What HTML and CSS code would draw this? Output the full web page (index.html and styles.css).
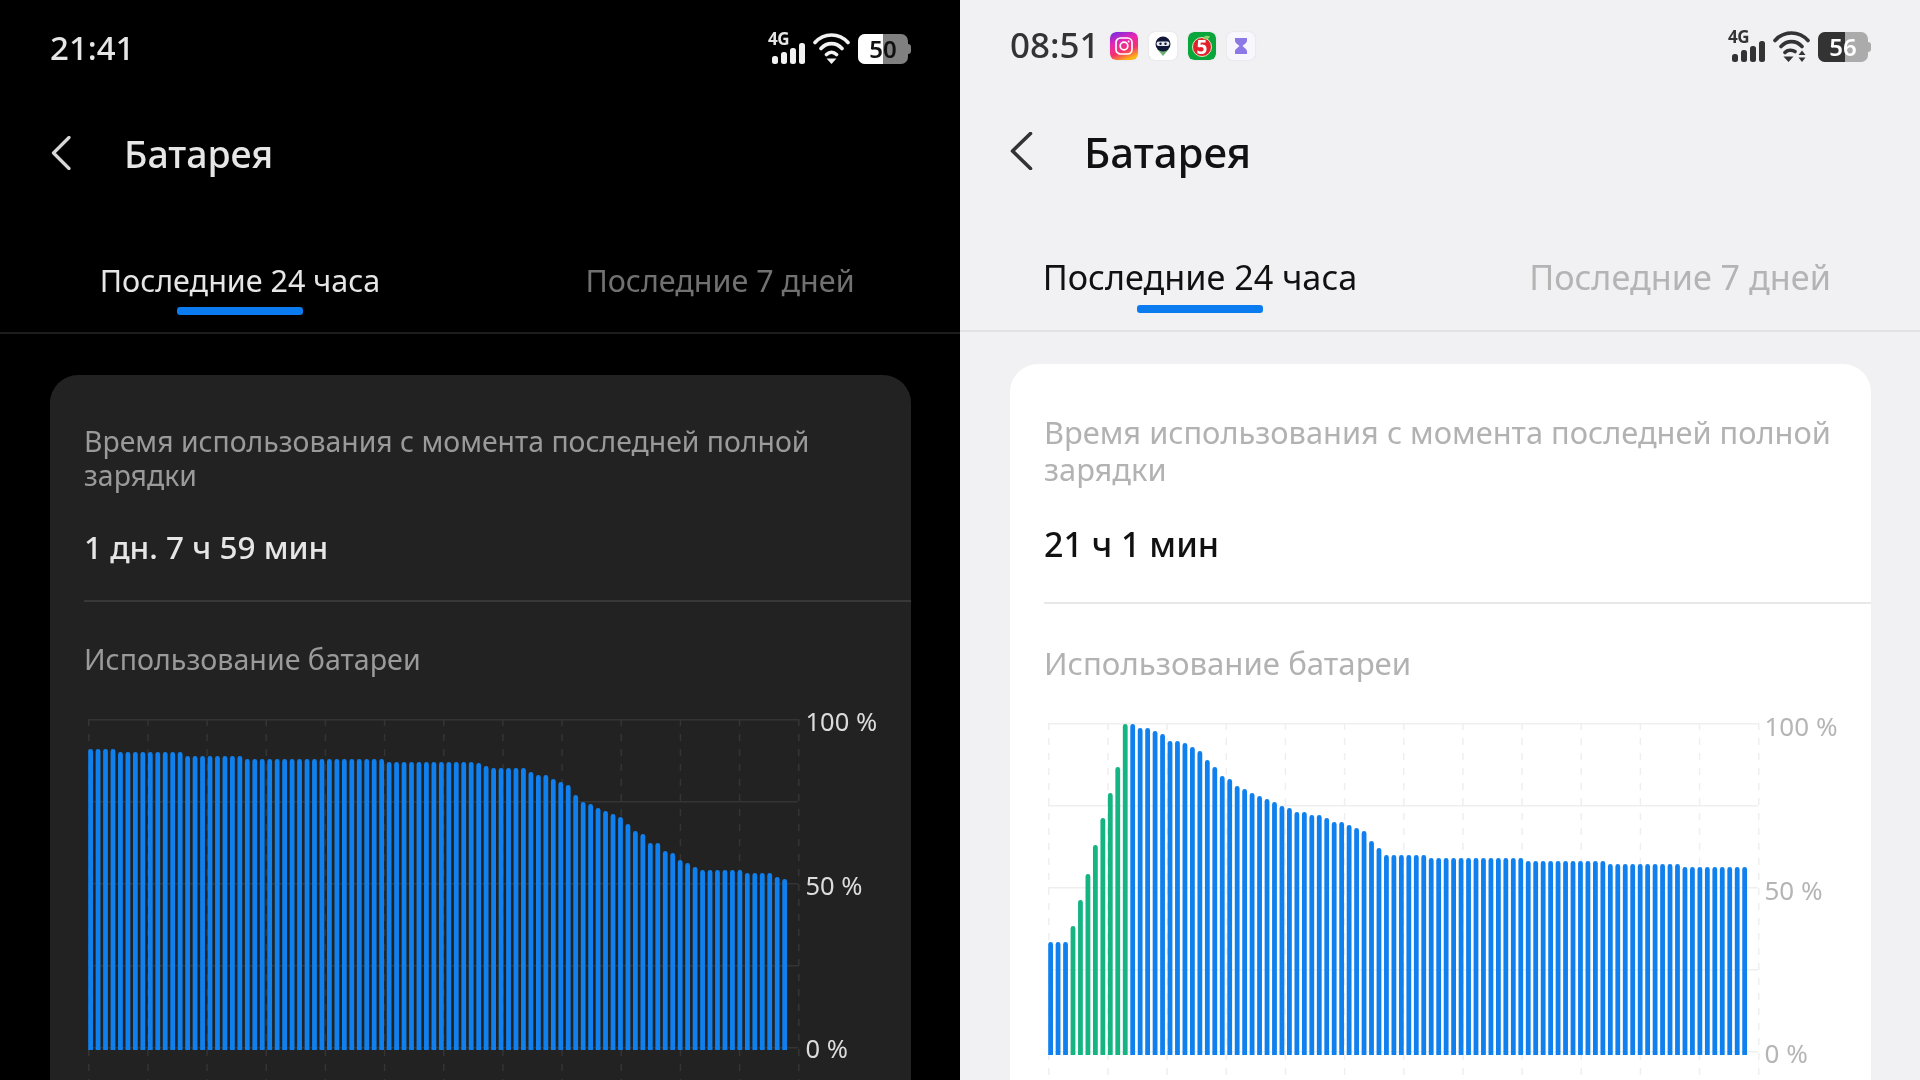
FILE: index.html
```html
<!DOCTYPE html>
<html lang="ru">
<head>
    <meta charset="UTF-8">
    <meta name="viewport" content="width=device-width, initial-scale=1.0">
    <title>Батарея</title>
    <link rel="stylesheet" href="styles.css">
</head>
<body>

<div class="screens">

    <!-- Dark phone -->
    <section class="screen dark">
        <div class="statusbar">
            <span class="time">21:41</span>
            <div class="status-icons">
                <div class="signal">
                    <span class="net">4G</span>
                    <svg width="34" height="21" viewBox="0 0 34 21"><rect x="1" y="13" width="6" height="8" rx="2.5"/><rect x="10" y="9" width="6" height="12" rx="2.5"/><rect x="19" y="5" width="6" height="16" rx="2.5"/><rect x="28" y="0" width="6" height="21" rx="2.5"/></svg>
                </div>
                <svg class="wifi" width="37" height="31" viewBox="0 0 37 31"><path d="M2 9.500C11 -0.500 26 -0.500 35 9.500M8 15.500C14 9 23 9 29 15.500M13.500 21.500C16.500 18.600 20.500 18.600 23.500 21.500" fill="none" stroke-width="3.600" stroke-linecap="round"/><path d="M13.500 25.500h10l-5 5.500z" class="wifi-dot"/></svg>
                <div class="battery"><span class="battery-fill"></span><span class="battery-text">50</span></div>
            </div>
        </div>

        <div class="titlebar">
            <svg class="back" width="20" height="34" viewBox="0 0 20 34"><path d="M18 1.500L2.500 17L18 32.500" fill="none" stroke-width="3.200" stroke-linecap="round" stroke-linejoin="round"/></svg>
            <h1 class="title">Батарея</h1>
        </div>

        <div class="tabs">
            <div class="tab active">Последние 24 часа<span class="tab-line"></span></div>
            <div class="tab">Последние 7 дней</div>
        </div>

        <div class="card">
            <p class="desc">Время использования с момента последней полной зарядки</p>
            <p class="value">1 дн. 7 ч 59 мин</p>
            <div class="divider"></div>
            <p class="chart-title">Использование батареи</p>
            <div class="chart">
                <svg class="plot" id="plotDark" width="712" height="361"></svg>
                <div class="axis"><span>100 %</span><span>50 %</span><span>0 %</span></div>
            </div>
        </div>
    </section>

    <!-- Light phone -->
    <section class="screen light">
        <div class="statusbar">
            <div class="status-left">
                <span class="time">08:51</span>
                <div class="app-icons">
                    <svg class="app" width="28" height="28" viewBox="0 0 28 28">
                        <defs><linearGradient id="insta" x1="0.2" y1="0" x2="0.6" y2="1"><stop offset="0" stop-color="#7a2be0"/><stop offset="0.35" stop-color="#e627b4"/><stop offset="0.7" stop-color="#f5336a"/><stop offset="1" stop-color="#fdb515"/></linearGradient></defs>
                        <rect width="28" height="28" rx="6" fill="url(#insta)"/>
                        <rect x="6" y="6" width="16" height="16" rx="4.500" fill="none" stroke="#fff" stroke-width="1.700"/>
                        <circle cx="14" cy="14" r="3.800" fill="none" stroke="#fff" stroke-width="1.700"/>
                        <circle cx="18.600" cy="9.400" r="1" fill="#fff"/>
                    </svg>
                    <svg class="app" width="28" height="28" viewBox="0 0 28 28">
                        <rect width="28" height="28" rx="6" fill="#fff"/>
                        <path d="M8 17h12l-6 7z" fill="#6fae73"/>
                        <circle cx="14" cy="12" r="7.500" fill="#101638"/>
                        <rect x="7.500" y="9.500" width="13" height="4.500" rx="2.200" fill="#e8e8ee"/>
                        <circle cx="11.500" cy="11.700" r="1.200" fill="#101638"/>
                        <circle cx="16.500" cy="11.700" r="1.200" fill="#101638"/>
                    </svg>
                    <svg class="app" width="28" height="28" viewBox="0 0 28 28">
                        <rect width="28" height="28" rx="6" fill="#0aa63c"/>
                        <circle cx="14" cy="15" r="9.500" fill="#e3202b" stroke="#d8efc4" stroke-width="1"/>
                        <path d="M15 5.500C17 3.500 20 3.500 22 4.500C21 7 18 8 15 7z" fill="#8ed36b"/>
                        <text x="14" y="21.500" text-anchor="middle" class="app-five">5</text>
                    </svg>
                    <svg class="app" width="28" height="28" viewBox="0 0 28 28">
                        <rect width="28" height="28" rx="6" fill="#f8f7fd"/>
                        <path d="M8 6h12v2.500c0 2.500-3 4-4.500 5.500c1.500 1.500 4.500 3 4.500 5.500V22H8v-2.500c0-2.500 3-4 4.500-5.500C11 12.500 8 11 8 8.500z" fill="#8c79e6"/>
                    </svg>
                </div>
            </div>
            <div class="status-icons">
                <div class="signal">
                    <span class="net">4G</span>
                    <svg width="34" height="21" viewBox="0 0 34 21"><rect x="1" y="13" width="6" height="8" rx="2.5"/><rect x="10" y="9" width="6" height="12" rx="2.5"/><rect x="19" y="5" width="6" height="16" rx="2.5"/><rect x="28" y="0" width="6" height="21" rx="2.5"/></svg>
                </div>
                <svg class="wifi" width="37" height="31" viewBox="0 0 37 31"><path d="M2 9.500C11 -0.500 26 -0.500 35 9.500M8 15.500C14 9 23 9 29 15.500M12 21.500C14.500 18.800 19 18.500 22 20.500" fill="none" stroke-width="3.600" stroke-linecap="round"/><path d="M10.500 25.500h10l-5 5.500zM29 19.500l3.500 4.500h-7zM29 31l3.500-4.500h-7z" class="wifi-dot"/></svg>
                <div class="battery"><span class="battery-fill"></span><span class="battery-text">56</span></div>
            </div>
        </div>

        <div class="titlebar">
            <svg class="back" width="23" height="38" viewBox="0 0 23 38"><path d="M20.500 1.500L2.500 19L20.500 36.500" fill="none" stroke-width="3.600" stroke-linecap="round" stroke-linejoin="round"/></svg>
            <h1 class="title">Батарея</h1>
        </div>

        <div class="tabs">
            <div class="tab active">Последние 24 часа<span class="tab-line"></span></div>
            <div class="tab">Последние 7 дней</div>
        </div>

        <div class="card">
            <p class="desc">Время использования с момента последней полной зарядки</p>
            <p class="value">21 ч 1 мин</p>
            <div class="divider"></div>
            <p class="chart-title">Использование батареи</p>
            <div class="chart">
                <svg class="plot" id="plotLight" width="712" height="356"></svg>
                <div class="axis"><span>100 %</span><span>50 %</span><span>0 %</span></div>
            </div>
        </div>
    </section>

</div>

<script src="script.js"></script>

</body>
</html>
```

FILE: styles.css
```css
* {
    box-sizing: border-box;
}
body {
    margin: 0;
    height: 1080px;
    overflow: hidden;
    font-family: "Noto Sans", sans-serif;
}
p, h1 {
    margin: 0;
    font-weight: 400;
}
.screens {
    display: flex;
    height: 1080px;
}
.screen {
    width: 960px;
    height: 1080px;
    overflow: hidden;
    filter: blur(0.5px);
}

/* themes */
.dark {
    background-color: #000;
    color: #e6e6e6;
    --card: #222222;
    --soft: #9a9a9a;
    --muted: #717171;
    --line: #1d1d1d;
    --divider: #383838;
    --axis: #dcdcdc;
    fill: #f2f2f2;
    stroke: #f2f2f2;
}
.light {
    background-color: #f1f1f3;
    color: #111;
    --card: #fff;
    --soft: #b2b2b2;
    --muted: #b4b4b4;
    --line: #e2e2e4;
    --divider: #e8e8e8;
    --axis: #b5b5b5;
    fill: #333;
    stroke: #333;
}

/* status bar */
.statusbar {
    display: flex;
    justify-content: space-between;
    align-items: center;
    padding: 0 49px 0 50px;
}
.dark .statusbar {
    height: 96px;
}
.light .statusbar {
    height: 92px;
}
.time {
    font-size: 33px;
    font-weight: 500;
    margin-top: -2px;
}
.light .time {
    font-size: 35px;
    color: #333;
    margin-top: -3px;
}
.status-left {
    display: flex;
    align-items: center;
    gap: 10px;
}
.app-icons {
    display: flex;
    gap: 11px;
}
.app {
    stroke: none;
    border-radius: 6px;
    box-shadow: 0 0 2px rgba(0, 0, 0, 0.1);
}
.app-five {
    font-size: 19px;
    font-weight: 700;
    fill: #fff;
}
.status-icons {
    display: flex;
    align-items: flex-end;
    gap: 8px;
}
.signal {
    display: flex;
    flex-direction: column;
    align-items: flex-start;
    width: 37px;
    height: 31px;
    position: relative;
}
.signal svg {
    stroke: none;
    margin-left: 2px;
    position: absolute;
    left: 1px;
    bottom: 0;
}
.net {
    font-size: 17px;
    font-weight: 700;
    line-height: 11px;
    letter-spacing: -0.5px;
}
.light .net {
    color: #333;
}
.wifi-dot {
    stroke: none;
}
.battery {
    position: relative;
    width: 50px;
    height: 30px;
    margin-right: 3px;
    border-radius: 7px;
    background-color: #808080;
    display: flex;
    align-items: center;
    justify-content: center;
}
.light .battery {
    background-color: #ababab;
}
.battery::after {
    content: "";
    position: absolute;
    right: -3px;
    top: 10px;
    width: 3px;
    height: 10px;
    border-radius: 0 3px 3px 0;
    background-color: inherit;
}
.battery-fill {
    position: absolute;
    left: 0;
    top: 0;
    bottom: 0;
    width: 25px;
    border-radius: 7px 0 0 7px;
    background-color: #fff;
}
.light .battery-fill {
    width: 27px;
    background-color: #333;
}
.battery-text {
    position: relative;
    font-size: 24px;
    font-weight: 600;
    color: #111;
}
.light .battery-text {
    color: #fff;
}

/* title */
.titlebar {
    display: flex;
    align-items: center;
    padding-left: 51px;
}
.dark .titlebar {
    height: 114px;
    gap: 53px;
}
.light .titlebar {
    height: 118px;
    gap: 51px;
    padding-left: 50px;
}
.back {
    fill: none;
}
.dark .back {
    stroke: #d8d8d8;
}
.title {
    font-size: 37.5px;
    font-weight: 500;
}
.light .title {
    font-size: 42px;
}

/* tabs */
.tabs {
    display: grid;
    grid-template-columns: 1fr 1fr;
    border-bottom: 2px solid var(--line);
    text-align: center;
    color: var(--muted);
}
.dark .tabs {
    height: 124px;
    padding-top: 48px;
    font-size: 30.5px;
}
.light .tabs {
    height: 122px;
    padding-top: 45px;
    font-size: 34.2px;
}
.tab {
    display: flex;
    flex-direction: column;
    align-items: center;
    line-height: 44px;
}
.dark .tab.active {
    color: #e6e6e6;
}
.light .tab.active {
    color: #111;
}
.tab-line {
    width: 126px;
    height: 8px;
    margin-top: 5px;
    border-radius: 3px;
    background-color: #0a7cf0;
}
.light .tab-line {
    margin-top: 6px;
}

/* card */
.card {
    background-color: var(--card);
    border-radius: 28px 28px 0 0;
    height: 800px;
}
.dark .card {
    margin: 41px 49px 0 50px;
    padding: 49px 0 0 34px;
}
.light .card {
    margin: 32px 49px 0 50px;
    padding: 50px 0 0 34px;
}
.desc {
    color: var(--soft);
}
.dark .desc {
    font-size: 28.4px;
    line-height: 34px;
    padding-right: 10px;
}
.light .desc {
    font-size: 30.8px;
    line-height: 37px;
    padding-right: 10px;
}
.dark .value {
    font-size: 31.5px;
    font-weight: 500;
    line-height: 44px;
    margin-top: 33px;
}
.light .value {
    font-size: 34px;
    font-weight: 500;
    line-height: 48px;
    margin-top: 32px;
}
.divider {
    height: 2px;
    background-color: var(--divider);
}
.dark .divider {
    margin-top: 31px;
}
.light .divider {
    margin-top: 34px;
}
.chart-title {
    color: var(--soft);
}
.dark .chart-title {
    font-size: 28.6px;
    line-height: 40px;
    margin-top: 37px;
}
.light .chart-title {
    font-size: 31.2px;
    line-height: 44px;
    margin-top: 37px;
}

/* chart */
.chart {
    display: flex;
    margin-left: 4px;
}
.dark .chart {
    margin-top: 40px;
}
.light .chart {
    margin-top: 38px;
}
.plot {
    flex: none;
    stroke: none;
    fill: none;
}
.axis {
    display: flex;
    flex-direction: column;
    justify-content: space-between;
    height: 345px;
    margin-top: -7px;
    margin-left: -4px;
    padding-left: 9.5px;
    font-size: 25.5px;
    line-height: 18px;
    color: var(--axis);
}
.light .axis {
    margin-top: -6px;
    padding-left: 8.5px;
    font-size: 26px;
}
.grid-line {
    stroke: #343434;
    stroke-width: 1.5;
}
.light .grid-line {
    stroke: #efefef;
}
.grid-dash {
    stroke-dasharray: 7 8;
}
.bar {
    fill: #0f80ee;
}
.bar.charging {
    fill: #14b483;
}
```

FILE: script.js
```js
// top of every bar in px from the 100 % line, one bar per 15 minutes
const darkTops = [
    30, 30, 30, 30, 33, 33, 33, 33, 33, 33, 33, 33, 33, 37, 37, 37, 37, 37, 37, 37, 37,
    40, 40, 40, 40, 40, 40, 40, 40, 40, 40, 40, 40, 40, 40, 40, 40, 40, 40, 40,
    43, 43, 43, 43, 43, 43, 43, 43, 43, 43, 43, 43, 44, 47, 49, 49, 49, 49, 49,
    53, 56, 56, 60, 63, 66, 76, 83, 85, 89, 92, 95, 98, 105, 112, 115, 124, 124, 132,
    134, 141, 144, 148, 151, 151, 151, 151, 151, 151, 154, 154, 154, 154, 158, 160
];
const lightTops = [
    219, 219, 219, 203, 177, 151, 122, 95, 70, 44, 1,
    1, 5, 5, 8, 11, 18, 18, 20, 24, 28, 37, 44, 53, 56, 63, 66, 70, 73, 76, 79, 83, 85,
    89, 89, 92, 92, 95, 99, 99, 102, 105, 108, 118, 125, 132, 132, 132, 132, 132, 132,
    135, 135, 135, 135, 135, 135, 135, 135, 135, 135, 135, 135, 135,
    138, 138, 138, 138, 138, 138, 138, 138, 138, 138, 138,
    141, 141, 141, 141, 141, 141, 141, 141, 141, 141,
    144, 144, 144, 144, 144, 144, 144, 144, 144
];

const NS = 'http://www.w3.org/2000/svg';
const PLOT_WIDTH = 710;
const PLOT_HEIGHT = 328;
const BAR_WIDTH = 4.8;
const BAR_STEP = 7.463;

function add(svg, name, attrs) {
    const el = document.createElementNS(NS, name);
    for (const key in attrs) {
        el.setAttribute(key, attrs[key]);
    }
    svg.appendChild(el);
}

function drawPlot(id, tops, barBottom, isCharging) {
    const svg = document.getElementById(id);
    const height = svg.getAttribute('height');

    // dashed columns, every 2 hours
    for (let i = 0; i <= 12; i++) {
        const x = 0.75 + i * PLOT_WIDTH / 12;
        add(svg, 'line', { x1: x, x2: x, y1: 0, y2: height, class: 'grid-line grid-dash' });
    }
    for (let i = 0; i <= 4; i++) {
        const y = 0.75 + i * PLOT_HEIGHT / 4;
        add(svg, 'line', { x1: 0, x2: PLOT_WIDTH, y1: y, y2: y, class: 'grid-line' });
    }

    tops.forEach(function (top, i) {
        add(svg, 'path', {
            d: `M${(i * BAR_STEP + 0.2).toFixed(2)} ${barBottom}V${top + 2.4}a2.4 2.4 0 0 1 ${BAR_WIDTH} 0V${barBottom}z`,
            class: isCharging(i) ? 'bar charging' : 'bar'
        });
    });
}

drawPlot('plotDark', darkTops, 331, function () { return false; });
drawPlot('plotLight', lightTops, 332, function (i) { return i >= 3 && i <= 10; });
```
